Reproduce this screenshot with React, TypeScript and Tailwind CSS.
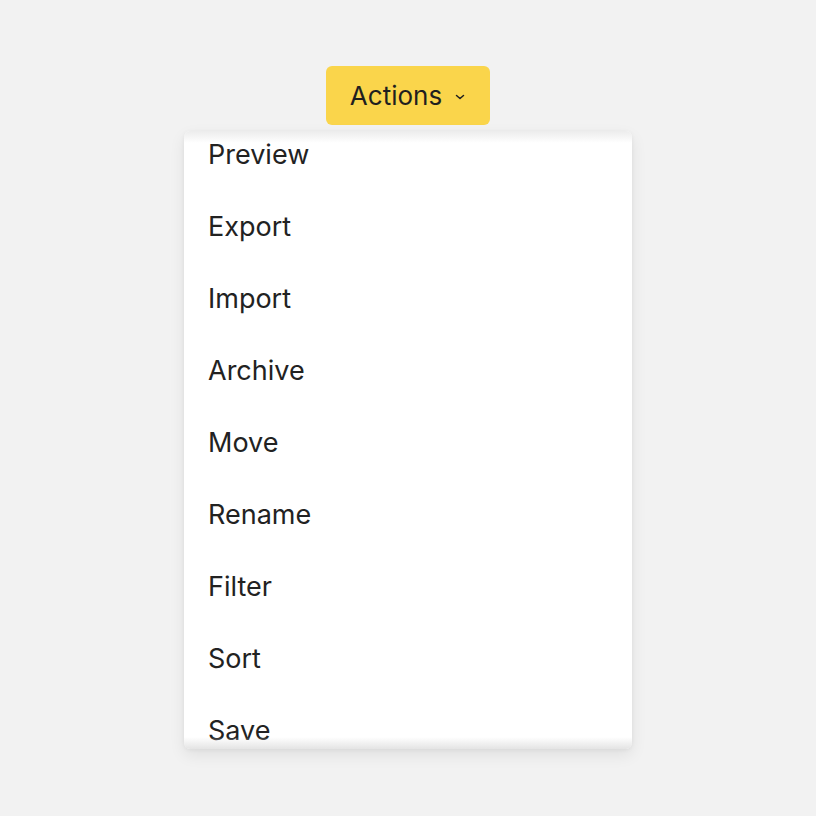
import React, { useEffect, useRef } from "react";

const items = ["Preview", "Export", "Import", "Archive", "Move", "Rename", "Filter", "Sort", "Save"];

export default function App() {
  const ref = useRef<HTMLDivElement>(null);
  useEffect(() => {
    if (ref.current) ref.current.scrollTop = 12;
  }, []);
  return (
    <div className="min-h-[816px] w-full bg-[#f2f2f2] flex flex-col items-center pt-[66px]" style={{ fontFamily: "Inter, 'Noto Sans', sans-serif" }}>
      <button className="h-[59px] w-[164px] rounded-[6px] bg-[#fad54b] text-[#1f1f1f] text-[26px] flex items-center justify-center gap-[12px]">
        <span>Actions</span>
        <svg width="12" height="10" viewBox="0 0 12 10" className="mt-[2px]">
          <path d="M2.5 3.5 L6 6.5 L9.5 3.5" fill="none" stroke="#1f1f1f" strokeWidth="1.5" strokeLinecap="round" strokeLinejoin="round" />
        </svg>
      </button>
      <div className="relative mt-[6px] w-[448px] h-[618px] bg-white rounded-[6px] shadow-[0_6px_16px_rgba(0,0,0,0.08),0_1px_4px_rgba(0,0,0,0.05)] overflow-hidden">
        <div ref={ref} className="h-full overflow-hidden">
          {items.map((t) => (
            <div key={t} className="h-[72px] flex items-center px-[24px] text-[27px] text-[#222222]">
              {t}
            </div>
          ))}
        </div>
        <div className="absolute top-0 left-0 right-0 h-[12px] bg-gradient-to-b from-[#ececec] to-transparent" />
        <div className="absolute bottom-0 left-0 right-0 h-[12px] bg-gradient-to-t from-[#e4e4e4] to-transparent" />
      </div>
    </div>
  );
}
